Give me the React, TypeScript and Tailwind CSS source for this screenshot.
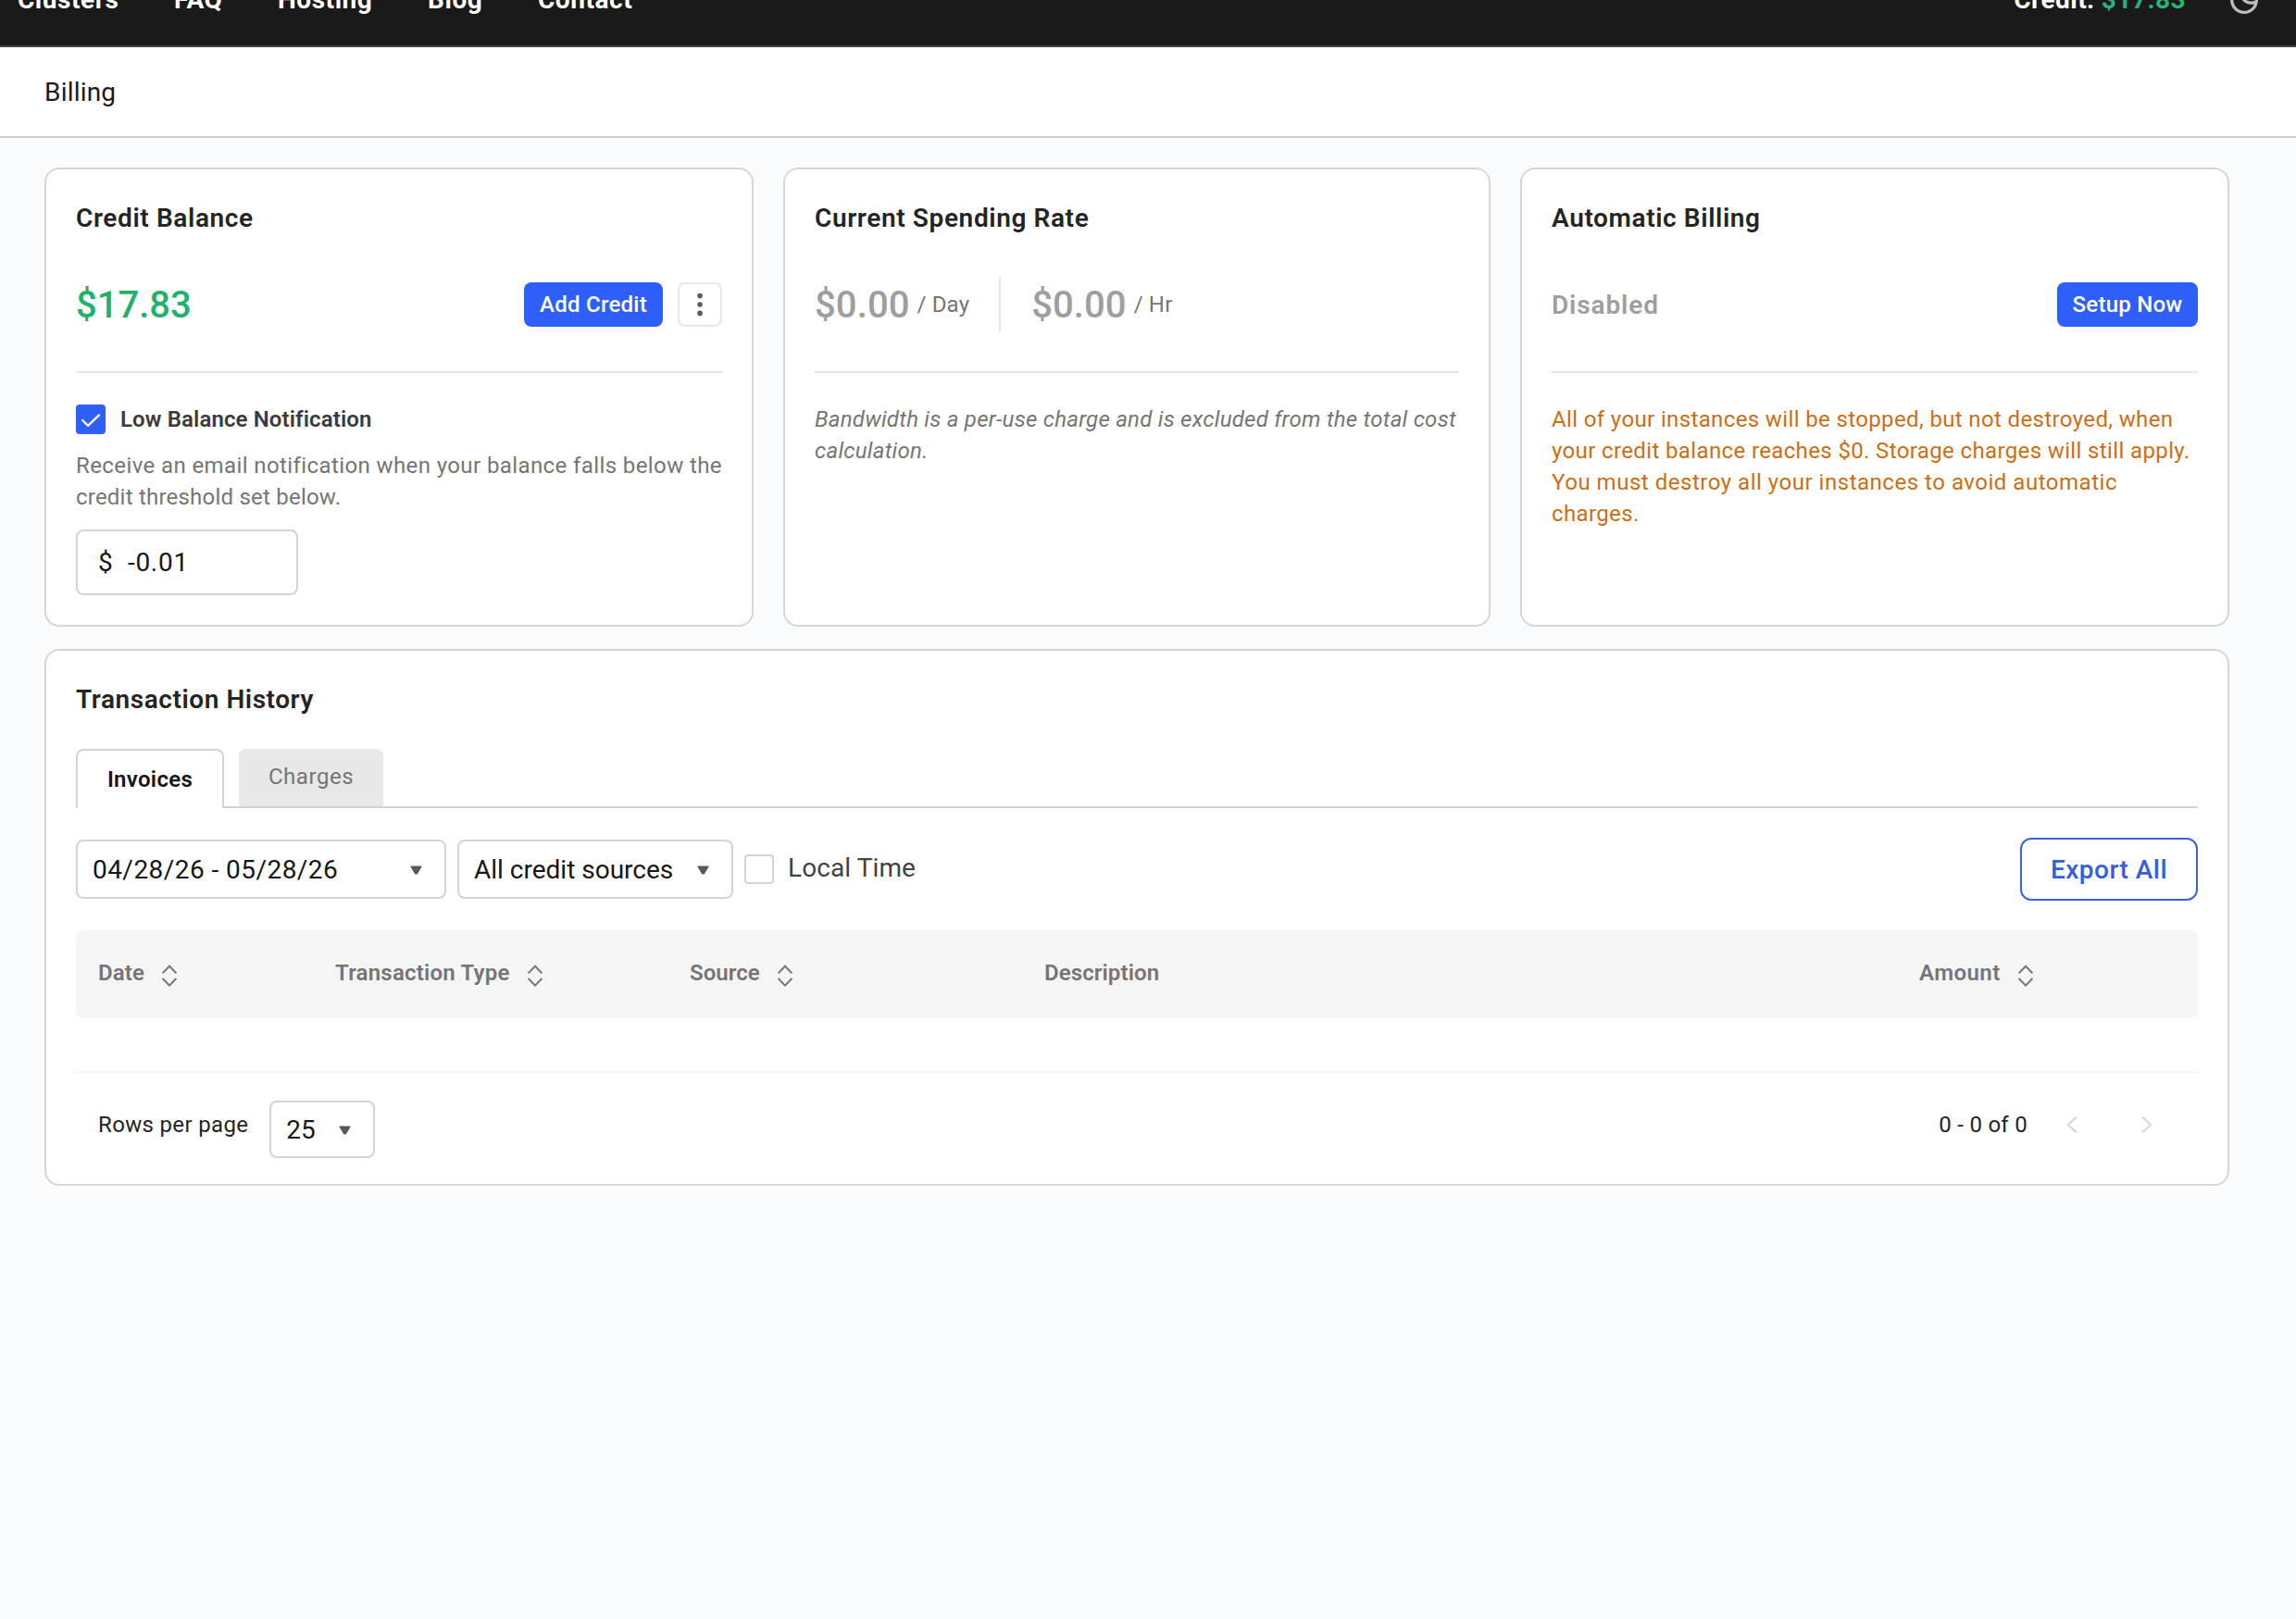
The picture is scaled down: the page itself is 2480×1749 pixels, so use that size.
import { ReactNode } from "react";

const navLinks = [
  { label: "Clusters", className: "w-[169px]" },
  { label: "FAQ", className: "w-[112px]" },
  { label: "Hosting", className: "w-[162px]" },
  { label: "Blog", className: "w-[119px]" },
  { label: "Contact", className: "" },
];

const columns = [
  { label: "Date", sortable: true, className: "tracking-[0.1px]" },
  { label: "Transaction Type", sortable: true, className: "tracking-[0.22px]" },
  { label: "Source", sortable: true, className: "tracking-[0.05px]" },
  { label: "Description", sortable: false, className: "tracking-[0.1px]" },
  { label: "Amount", sortable: true, className: "tracking-[0.45px]" },
];

function MoonIcon() {
  return (
    <svg viewBox="0 0 24 24" className="size-10" fill="#bdbdbd">
      <path d="M9.37 5.51c-.18.64-.27 1.31-.27 1.99 0 4.08 3.32 7.4 7.4 7.4.68 0 1.35-.09 1.99-.27C17.45 17.19 14.93 19 12 19c-3.86 0-7-3.14-7-7 0-2.93 1.81-5.45 4.37-6.49zM12 3c-4.97 0-9 4.03-9 9s4.03 9 9 9 9-4.03 9-9c0-.46-.04-.92-.1-1.36-.98 1.37-2.58 2.26-4.4 2.26-2.98 0-5.4-2.42-5.4-5.4 0-1.81.89-3.42 2.26-4.4-.44-.06-.9-.1-1.36-.1z" />
    </svg>
  );
}

function KebabIcon() {
  return (
    <svg viewBox="0 0 8 26" className="h-[26px] w-2" fill="#5c5c5c">
      <circle cx="4" cy="3.6" r="2.8" />
      <circle cx="4" cy="13" r="2.8" />
      <circle cx="4" cy="22.4" r="2.8" />
    </svg>
  );
}

function CheckIcon() {
  return (
    <svg viewBox="0 0 32 32" className="size-8" fill="none" stroke="#fff" strokeWidth="2.4">
      <path d="M7.2 17 L13 22.8 L25 11.4" strokeLinecap="round" strokeLinejoin="round" />
    </svg>
  );
}

function SortIcon() {
  return (
    <svg viewBox="0 0 18 26" className="h-[26px] w-[18px]" fill="none" stroke="#757575" strokeWidth="2">
      <path d="M1.6 11.4 L9 3.8 L16.4 11.4 M1.6 17 L9 24.6 L16.4 17" />
    </svg>
  );
}

function CaretIcon() {
  return (
    <svg viewBox="0 0 13 10" className="mt-0.5 h-[10px] w-[13px]" fill="#595959" stroke="#595959" strokeWidth="1.6" strokeLinejoin="round">
      <path d="M1.2 1.2 H11.8 L7.3 8.6 H5.7 Z" />
    </svg>
  );
}

function Chevron({ path }: { path: string }) {
  return (
    <svg viewBox="0 0 13 20" className="h-5 w-[13px]" fill="none" stroke="#d9d9d9" strokeWidth="2.4">
      <path d={path} />
    </svg>
  );
}

function Card({ title, top, children }: { title: string; top: ReactNode; children: ReactNode }) {
  return (
    <section className="h-[496px] rounded-[16px] border-2 border-[#d4d6d7] bg-white p-8">
      <h2 className="text-[28px] leading-[42px] font-semibold tracking-[0.62px] text-[#242424]">{title}</h2>
      <div className="mt-[42px] flex h-[60px] items-center">{top}</div>
      <div className="mt-[42px] h-0.5 bg-[#e6e6e6]" />
      {children}
    </section>
  );
}

function Select({ value, className }: { value: string; className: string }) {
  return (
    <button
      className={`flex items-center justify-between rounded-[8px] border-2 border-[#d4d4d4] bg-white text-[28px] text-[#161616] ${className}`}
    >
      <span className="pt-px">{value}</span>
      <CaretIcon />
    </button>
  );
}

function Rate({ amount, unit }: { amount: string; unit: string }) {
  return (
    <div className="flex items-center">
      <span className="pt-0.5 text-[40px] leading-[60px] font-medium tracking-[0.1px] text-[#9e9e9e]">{amount}</span>
      <span className="ml-2 text-[24px] tracking-[0.15px] text-[#757575]">{unit}</span>
    </div>
  );
}

export default function App() {
  return (
    <div className="min-h-[1749px] bg-[#fafbfd] font-[Roboto,sans-serif]">
      <header className="flex h-[51px] items-end justify-between overflow-hidden border-b-2 border-[#3d3d3d] bg-[#1a1a1a] pr-9 pl-[19px] text-[28px] font-bold text-white">
        <nav className="flex h-[99px] shrink-0 items-center tracking-[0.55px]">
          {navLinks.map((link) => (
            <a key={link.label} className={link.className}>
              {link.label}
            </a>
          ))}
        </nav>
        <div className="flex h-[99px] shrink-0 items-center tracking-[0.45px]">
          <span>
            Credit: <span className="text-[#27b376]">$17.83</span>
          </span>
          <span className="ml-[43px]">
            <MoonIcon />
          </span>
        </div>
      </header>

      <div className="flex h-[98px] items-center border-b-2 border-[#d1d1d1] bg-white px-12">
        <h1 className="pt-px text-[28px] leading-8 tracking-[0.2px] text-[#1a1a1a]">Billing</h1>
      </div>

      <main className="w-[2408px] pt-8 pl-12">
        <div className="grid grid-cols-[766px_764px_766px] gap-8">
          <Card
            title="Credit Balance"
            top={
              <>
                <span className="flex-1 pt-0.5 text-[40px] leading-[60px] font-medium text-[#1fb26b]">$17.83</span>
                <button className="h-12 w-[150px] rounded-[8px] bg-[#2f5ffb] text-[24px] font-medium tracking-[0.25px] text-white">
                  Add Credit
                </button>
                <button className="ml-4 flex size-12 items-center justify-center rounded-[8px] border-2 border-[#e8e8e8] bg-white">
                  <KebabIcon />
                </button>
              </>
            }
          >
            <label className="mt-[34px] flex h-8 items-center text-[24px] font-semibold tracking-[0.12px] text-[#3b3b3b]">
              <span className="mr-4 rounded-[4px] bg-[#2f5ffb]">
                <CheckIcon />
              </span>
              Low Balance Notification
            </label>
            <p className="mt-[17px] text-[24px] leading-[34px] tracking-[0.4px] whitespace-nowrap text-[#757575]">
              Receive an email notification when your balance falls below the
              <br />
              <span className="tracking-[0.22px]">credit threshold set below.</span>
            </p>
            <div className="mt-[18px] flex h-[71px] w-60 items-center rounded-[8px] border-2 border-[#d4d4d4] pl-[22px] text-[28px] text-[#161616]">
              <span className="w-8">$</span>
              <span className="tracking-[0.7px]">-0.01</span>
            </div>
          </Card>

          <Card
            title="Current Spending Rate"
            top={
              <>
                <Rate amount="$0.00" unit="/ Day" />
                <div className="mr-[33px] ml-8 h-[60px] w-0.5 bg-[#e6e6e6]" />
                <Rate amount="$0.00" unit="/ Hr" />
              </>
            }
          >
            <p className="mt-[33px] text-[24px] leading-[34px] tracking-[0.26px] whitespace-nowrap text-[#757575] italic">
              Bandwidth is a per-use charge and is excluded from the total cost
              <br />
              calculation.
            </p>
          </Card>

          <Card
            title="Automatic Billing"
            top={
              <>
                <span className="flex-1 pt-0.5 text-[28px] font-semibold tracking-[0.88px] text-[#9e9e9e]">Disabled</span>
                <button className="h-12 w-[152px] rounded-[8px] bg-[#2f5ffb] text-[24px] font-medium tracking-[0.25px] text-white">
                  Setup Now
                </button>
              </>
            }
          >
            <p className="mt-[33px] text-[24px] leading-[34px] tracking-[0.37px] whitespace-nowrap text-[#cc6e14]">
              All of your instances will be stopped, but not destroyed, when
              <br />
              your credit balance reaches $0. Storage charges will still apply.
              <br />
              <span className="tracking-[0.52px]">You must destroy all your instances to avoid automatic</span>
              <br />
              charges.
            </p>
          </Card>
        </div>

        <section className="mt-6 h-[580px] rounded-[16px] border-2 border-[#d4d6d7] bg-white p-8">
          <h2 className="text-[28px] leading-[42px] font-semibold tracking-[0.56px] text-[#242424]">Transaction History</h2>

          <div className="mt-8 flex h-16 border-b-2 border-[#d1d1d1] text-[24px]">
            <button className="mr-4 -mb-0.5 flex w-40 items-center justify-center rounded-t-[8px] border-2 border-b-0 border-[#d4d4d4] bg-white font-semibold tracking-[0.3px] text-[#161616]">
              Invoices
            </button>
            <button className="flex w-39 items-center justify-center rounded-t-[8px] bg-[#e8e8e8] pb-[3px] tracking-[0.55px] text-[#757575]">
              Charges
            </button>
          </div>

          <div className="mt-8 flex h-[68px] items-center">
            <Select value="04/28/26 - 05/28/26" className="h-16 w-[400px] pr-6 pl-4 tracking-[0.45px]" />
            <Select value="All credit sources" className="ml-3 h-16 w-[298px] pr-6 pl-4" />
            <span className="ml-3 size-8 rounded-[4px] border-2 border-[#d4d4d4] bg-white" />
            <span className="ml-[15px] pb-[3px] text-[28px] tracking-[0.1px] text-[#424242]">Local Time</span>
            <button className="ml-auto h-[68px] w-48 rounded-[12px] border-2 border-[#3c63d6] pt-px text-[28px] font-medium tracking-[0.5px] text-[#365ddb]">
              Export All
            </button>
          </div>

          <div className="mt-8 grid h-[95px] grid-cols-[256px_383px_383px_945px_1fr] items-center rounded-[8px] bg-[#f5f5f5] pl-6 text-[24px] font-semibold text-[#757575]">
            {columns.map((col) => (
              <div key={col.label} className="flex items-center">
                <span className={`mr-[18px] pb-[3px] ${col.className}`}>{col.label}</span>
                {col.sortable && <SortIcon />}
              </div>
            ))}
          </div>

          <div className="mt-[57px] flex justify-between border-t-2 border-[#f5f5f5] pt-[30px] pr-[49px] pl-6 text-[24px] text-[#242424]">
            <div className="flex items-center">
              <span className="mr-[23px] pb-[10px] tracking-[0.34px]">Rows per page</span>
              <Select value="25" className="h-[62px] w-[114px] pr-6 pl-4" />
            </div>
            <div className="flex items-center pb-[10px]">
              <span className="tracking-[0.28px]">0 - 0 of 0</span>
              <span className="ml-[42px]">
                <Chevron path="M11 1.5 L2 10 L11 18.5" />
              </span>
              <span className="ml-[67px]">
                <Chevron path="M2 1.5 L11 10 L2 18.5" />
              </span>
            </div>
          </div>
        </section>
      </main>
    </div>
  );
}
